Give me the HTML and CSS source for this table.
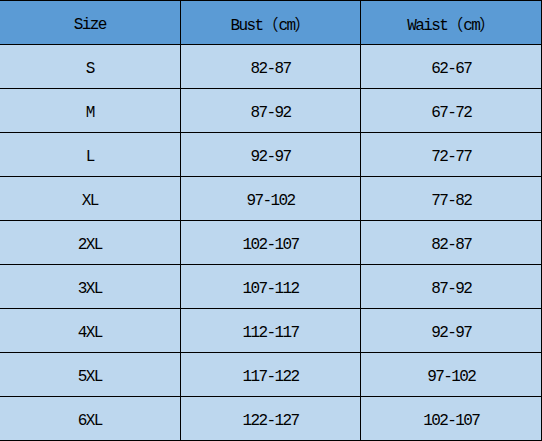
FILE: index.html
```html
<!DOCTYPE html>
<html lang="en">
<head>
<meta charset="utf-8">
<title>Size chart</title>
<link rel="stylesheet" href="styles.css">
</head>
<body>
<table class="chart">
  <thead>
    <tr><th>Size</th><th>Bust<span class="fw">（</span>cm<span class="fw">）</span></th><th>Waist<span class="fw">（</span>cm<span class="fw">）</span></th></tr>
  </thead>
  <tbody>
    <tr><td>S</td><td>82-87</td><td>62-67</td></tr>
    <tr><td>M</td><td>87-92</td><td>67-72</td></tr>
    <tr><td>L</td><td>92-97</td><td>72-77</td></tr>
    <tr><td>XL</td><td>97-102</td><td>77-82</td></tr>
    <tr><td>2XL</td><td>102-107</td><td>82-87</td></tr>
    <tr><td>3XL</td><td>107-112</td><td>87-92</td></tr>
    <tr><td>4XL</td><td>112-117</td><td>92-97</td></tr>
    <tr><td>5XL</td><td>117-122</td><td>97-102</td></tr>
    <tr><td>6XL</td><td>122-127</td><td>102-107</td></tr>
  </tbody>
</table>
</body>
</html>
```
FILE: styles.css
```css
html, body {
  margin: 0;
  padding: 0;
  overflow: hidden;
  background: #ffffff;
}
.chart {
  margin-left: -1px;
  border-collapse: separate;
  border-spacing: 1px;
  background: #000000;
  table-layout: fixed;
  font-family: "Liberation Mono", "Noto Sans CJK SC", monospace;
  font-size: 16px;
  letter-spacing: -1.6px;
  color: #000000;
}
.chart th,
.chart td {
  width: 180px;
  height: 39px;
  padding: 4px 0 0 0;
  text-align: center;
  vertical-align: middle;
  font-weight: normal;
  line-height: 18px;
  background: #bdd7ee;
}
.chart th {
  background: #5b9bd5;
}
.chart .fw {
  font-family: "Noto Sans CJK SC", sans-serif;
  font-size: 16px;
  letter-spacing: 0;
}
```
